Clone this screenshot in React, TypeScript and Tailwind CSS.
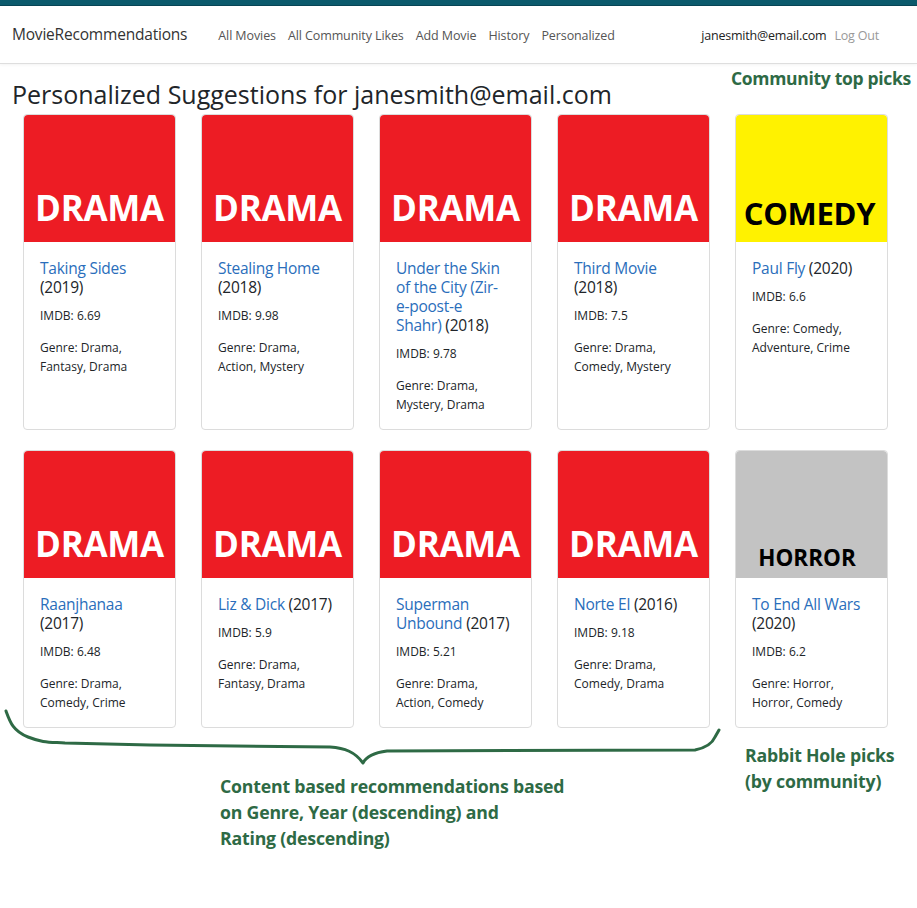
import React from "react";

type Movie = {
  title: string;
  year: number;
  imdb: string;
  genre: string;
  poster: "drama" | "comedy" | "horror";
};

const topRow: Movie[] = [
  { title: "Taking Sides", year: 2019, imdb: "6.69", genre: "Drama, Fantasy, Drama", poster: "drama" },
  { title: "Stealing Home", year: 2018, imdb: "9.98", genre: "Drama, Action, Mystery", poster: "drama" },
  { title: "Under the Skin\nof the City (Zir-\ne-poost-e\nShahr)", year: 2018, imdb: "9.78", genre: "Drama, Mystery, Drama", poster: "drama" },
  { title: "Third Movie", year: 2018, imdb: "7.5", genre: "Drama, Comedy, Mystery", poster: "drama" },
  { title: "Paul Fly", year: 2020, imdb: "6.6", genre: "Comedy, Adventure, Crime", poster: "comedy" },
];

const bottomRow: Movie[] = [
  { title: "Raanjhanaa", year: 2017, imdb: "6.48", genre: "Drama, Comedy, Crime", poster: "drama" },
  { title: "Liz & Dick", year: 2017, imdb: "5.9", genre: "Drama, Fantasy, Drama", poster: "drama" },
  { title: "Superman Unbound", year: 2017, imdb: "5.21", genre: "Drama, Action, Comedy", poster: "drama" },
  { title: "Norte El", year: 2016, imdb: "9.18", genre: "Drama, Comedy, Drama", poster: "drama" },
  { title: "To End All Wars", year: 2020, imdb: "6.2", genre: "Horror, Horror, Comedy", poster: "horror" },
];

function Poster({ kind }: { kind: Movie["poster"] }) {
  if (kind === "comedy") {
    return (
      <div className="h-[127px] bg-[#fff200] rounded-t-[4px] flex items-end justify-center pb-[13px] pr-[4px]">
        <span className="text-[31px] leading-none font-bold text-black tracking-[-0.3px]">COMEDY</span>
      </div>
    );
  }
  if (kind === "horror") {
    return (
      <div className="h-[127px] bg-[#c3c3c3] rounded-t-[4px] flex items-end justify-center pb-[9px] pr-[9px]">
        <span className="text-[22.5px] leading-none font-bold text-black">HORROR</span>
      </div>
    );
  }
  return (
    <div className="h-[127px] bg-[#ed1c24] rounded-t-[4px] flex items-end justify-center pb-[17px]">
      <span className="text-[35px] leading-none font-bold text-white tracking-[-0.3px]">DRAMA</span>
    </div>
  );
}

function MovieCard({ movie }: { movie: Movie }) {
  return (
    <div className="w-[153px] border border-[#dcdcdc] rounded-[4px] bg-white flex flex-col">
      <Poster kind={movie.poster} />
      <div className="pl-[16px] pr-[17px] pt-[17px] pb-[15px]">
        <div className="text-[15.5px] leading-[19px] text-[#212529] tracking-[-0.25px] mb-[10px]">
          <span className="text-[#2a6ebb] whitespace-pre-line">{movie.title}</span> ({movie.year})
        </div>
        <p className="text-[12px] leading-[18px] text-[#212529] mb-[13px]">IMDB: {movie.imdb}</p>
        <p className="text-[12px] leading-[19px] text-[#212529]">Genre: {movie.genre}</p>
      </div>
    </div>
  );
}

export default function App() {
  return (
    <div className="relative min-h-[908px] bg-white font-['Open_Sans',sans-serif]">
      <div className="h-[6px] bg-[#0b5a6c] border-b border-[#084656]" />
      <nav className="h-[58px] flex items-center pl-[12px] pr-[38px] border-b border-[#dedede] shadow-[0_1px_3px_rgba(0,0,0,0.05)]">
        <span className="text-[15.5px] text-[#333] tracking-[-0.2px]">MovieRecommendations</span>
        <div className="flex gap-[12px] ml-[31px] pt-[3px] text-[12.5px] text-[#555] tracking-[-0.1px]">
          <span>All Movies</span>
          <span>All Community Likes</span>
          <span>Add Movie</span>
          <span>History</span>
          <span>Personalized</span>
        </div>
        <div className="ml-auto flex gap-[8px] pt-[3px] text-[12.5px] tracking-[-0.2px]">
          <span className="text-[#222]">janesmith@email.com</span>
          <span className="text-[#999]">Log Out</span>
        </div>
      </nav>

      <div className="flex justify-between pl-[12px] pr-[6px]">
        <h1 className="mt-[14px] text-[25px] leading-[32px] font-medium text-[#212529]">
          Personalized Suggestions for janesmith@email.com
        </h1>
        <span className="mt-[2px] text-[17.5px] leading-[24px] font-bold text-[#2e6a45] tracking-[-0.3px]">
          Community top picks
        </span>
      </div>

      <div className="pl-[23px] mt-[4px] flex flex-col gap-[20px]">
        <div className="flex gap-[25px] items-stretch">
          {topRow.map((m) => (
            <MovieCard key={m.title} movie={m} />
          ))}
        </div>
        <div className="flex gap-[25px] items-stretch">
          {bottomRow.map((m) => (
            <MovieCard key={m.title} movie={m} />
          ))}
        </div>
      </div>

      <svg
        className="absolute left-0 top-[700px]"
        width="730"
        height="70"
        viewBox="0 0 730 70"
        fill="none"
      >
        <path
          d="M6 11 C 10 22, 13 31, 28 37 S 50 42, 65 43 L 150 45 L 330 47 C 345 48, 355 52, 363 63 C 366 57, 372 53, 387 51 L 695 50 C 705 48, 712 44, 715 37 L 719 30"
          stroke="#2e6a45"
          strokeWidth="3"
          strokeLinecap="round"
          strokeLinejoin="round"
        />
      </svg>

      <div className="flex mt-[14px]">
        <div className="w-[745px] pl-[220px] pt-[31px] text-[17.7px] leading-[26px] font-bold text-[#2e6a45] tracking-[-0.2px]">
          Content based recommendations based
          <br />
          on Genre, Year (descending) and
          <br />
          Rating (descending)
        </div>
        <div className="text-[17.7px] leading-[26px] font-bold text-[#2e6a45] tracking-[-0.2px]">
          Rabbit Hole picks
          <br />
          (by community)
        </div>
      </div>
    </div>
  );
}
